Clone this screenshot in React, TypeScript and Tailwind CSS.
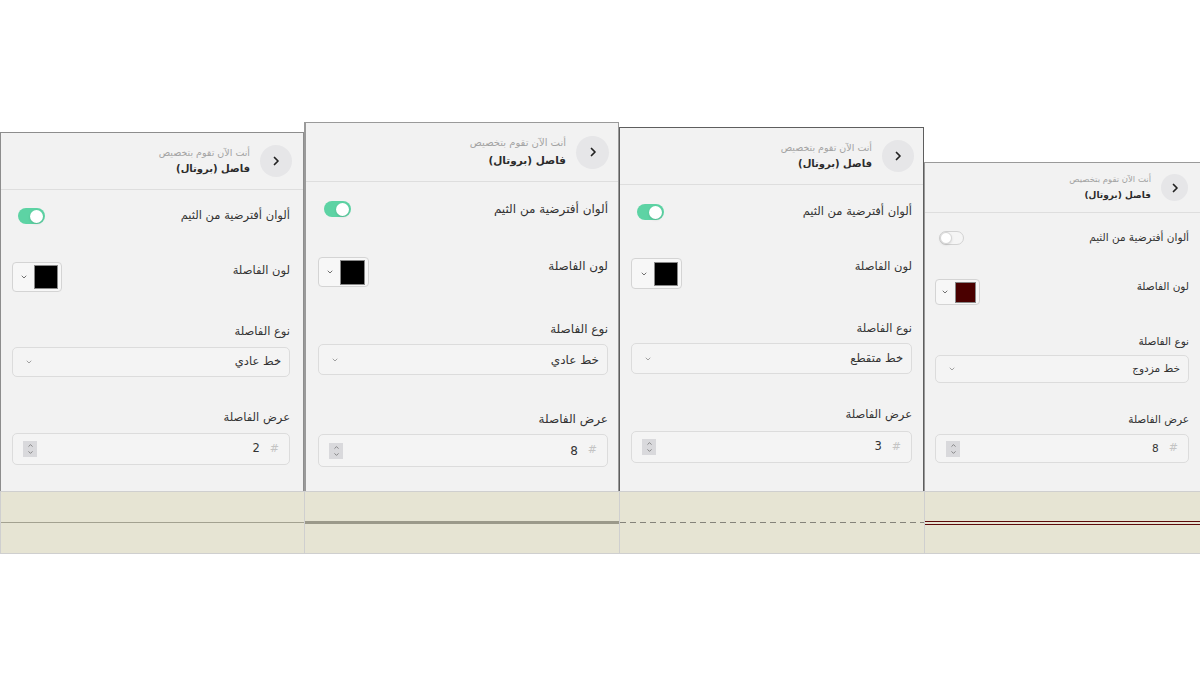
import { ChevronDown, ChevronUp } from "lucide-react";

const font = { fontFamily: '"DejaVu Sans", "Noto Sans", sans-serif' };

type Cfg = {
  col: string;
  panel: string;
  header: string;
  circle: string;
  small: string;
  title: string;
  label: string;
  toggleRow: string;
  colorRow: string;
  picker: string;
  swatch: string;
  typeLabel: string;
  select: string;
  widthLabel: string;
  input: string;
  pad: string;
  on: boolean;
  color: string;
  kind: string;
  value: string;
  line: string;
};

const panels: Cfg[] = [
  {
    col: "w-[304px]",
    panel: "h-[359px] border-t border-l border-r border-[#8d8d8d]",
    header: "h-[57px] pr-[11px]",
    circle: "w-[32px] h-[32px]",
    small: "text-[9.5px]",
    title: "text-[10px]",
    label: "text-[11.5px]",
    toggleRow: "mt-[12px] h-[28px]",
    colorRow: "mt-[32px] h-[30px]",
    picker: "w-[50px]",
    swatch: "w-[24px] h-[24px]",
    typeLabel: "mt-[32px] h-[16px]",
    select: "mt-[7px] h-[30px]",
    widthLabel: "mt-[33px] h-[16px]",
    input: "mt-[7px] h-[32px]",
    pad: "pl-[11px] pr-[13px]",
    on: true,
    color: "#000000",
    kind: "خط عادي",
    value: "2",
    line: "h-0 border-t border-[#a3a190]",
  },
  {
    col: "w-[315px]",
    panel: "h-[369px] border-t border-l-2 border-r border-[#9a9a9a]",
    header: "h-[59px] pr-[9px]",
    circle: "w-[33px] h-[33px]",
    small: "text-[10px]",
    title: "text-[10.5px]",
    label: "text-[12px]",
    toggleRow: "mt-[13px] h-[28px]",
    colorRow: "mt-[34px] h-[30px]",
    picker: "w-[51px]",
    swatch: "w-[25px] h-[25px]",
    typeLabel: "mt-[34px] h-[16px]",
    select: "mt-[7px] h-[31px]",
    widthLabel: "mt-[36px] h-[16px]",
    input: "mt-[7px] h-[33px]",
    pad: "pl-[12px] pr-[10px]",
    on: true,
    color: "#000000",
    kind: "خط عادي",
    value: "8",
    line: "h-0 border-t-[3px] border-[#9b998a]",
  },
  {
    col: "w-[305px]",
    panel: "h-[364px] border-t border-l border-r border-[#5e5e5e]",
    header: "h-[57px] pr-[9px]",
    circle: "w-[32px] h-[32px]",
    small: "text-[9.5px]",
    title: "text-[10px]",
    label: "text-[11.5px]",
    toggleRow: "mt-[13px] h-[28px]",
    colorRow: "mt-[32px] h-[31px]",
    picker: "w-[51px]",
    swatch: "w-[24px] h-[24px]",
    typeLabel: "mt-[32px] h-[16px]",
    select: "mt-[6px] h-[31px]",
    widthLabel: "mt-[33px] h-[16px]",
    input: "mt-[8px] h-[32px]",
    pad: "pl-[11px] pr-[11px]",
    on: true,
    color: "#000000",
    kind: "خط متقطع",
    value: "3",
    line: "h-[1px] bg-[repeating-linear-gradient(to_right,#85837a_0_6px,transparent_6px_10px)]",
  },
  {
    col: "w-[276px]",
    panel: "h-[329px] border-t border-l border-[#9a9a9a]",
    header: "h-[50px] pr-[12px]",
    circle: "w-[27px] h-[27px]",
    small: "text-[8.5px]",
    title: "text-[9px]",
    label: "text-[10.5px]",
    toggleRow: "mt-[13px] h-[24px]",
    colorRow: "mt-[29px] h-[26px]",
    picker: "w-[45px]",
    swatch: "w-[21px] h-[21px]",
    typeLabel: "mt-[30px] h-[14px]",
    select: "mt-[6px] h-[28px]",
    widthLabel: "mt-[30px] h-[14px]",
    input: "mt-[7px] h-[29px]",
    pad: "pl-[10px] pr-[11px]",
    on: false,
    color: "#4a0000",
    kind: "خط مزدوج",
    value: "8",
    line: "h-0 border-t-[4px] border-double border-[#5e0b0b]",
  },
];

function BackArrow() {
  return (
    <svg width="12" height="12" viewBox="0 0 24 24" fill="none" stroke="currentColor" strokeWidth="3.5" strokeLinecap="round" strokeLinejoin="round">
      <path d="M9 5l7 7-7 7" />
    </svg>
  );
}

function Panel({ c }: { c: Cfg }) {
  return (
    <div className={`flex flex-col ${c.col}`}>
      <div className={`bg-[#f2f2f2] flex flex-col ${c.panel}`} dir="rtl" style={font}>
        <div className={`flex items-center gap-[10px] border-b border-[#dedede] ${c.header}`}>
          <div className={`rounded-full bg-[#e6e6e8] flex items-center justify-center text-[#222] ${c.circle}`}>
            <BackArrow />
          </div>
          <div className="flex flex-col gap-[7px]">
            <span className={`text-[#a3a3a3] leading-none ${c.small}`}>أنت الآن تقوم بتخصيص</span>
            <span className={`text-[#2b2b2b] font-bold leading-none ${c.title}`}>فاصل (بروتال)</span>
          </div>
        </div>
        <div className={`flex flex-col ${c.pad}`}>
          <div className={`flex items-center justify-between ${c.toggleRow}`}>
            <span className={`text-[#333] ${c.label}`}>ألوان أفترضية من الثيم</span>
            {c.on ? (
              <div className="w-[27px] h-[16px] rounded-full bg-[#5dd3a4] flex items-center justify-start px-[2px] ml-[6px]">
                <div className="w-[13px] h-[13px] rounded-full bg-white shadow" />
              </div>
            ) : (
              <div className="w-[25px] h-[14px] rounded-full bg-[#f5f5f5] border border-[#d2d2d2] flex items-center justify-end ml-[4px]">
                <div className="w-[12px] h-[12px] rounded-full bg-white border border-[#d5d5d5] shadow-sm" />
              </div>
            )}
          </div>
          <div className={`flex items-center justify-between ${c.colorRow}`}>
            <span className={`text-[#333] self-start ${c.label}`}>لون الفاصلة</span>
            <div className={`h-full rounded-[4px] border border-[#d4d4d4] bg-[#f7f7f7] flex items-center gap-[6px] px-[3px] ${c.picker}`}>
              <div className={`border border-[#888] ${c.swatch}`} style={{ backgroundColor: c.color }} />
              <ChevronDown size={8} strokeWidth={2.5} className="text-[#555]" />
            </div>
          </div>
          <div className={`flex items-center ${c.typeLabel}`}>
            <span className={`text-[#333] ${c.label}`}>نوع الفاصلة</span>
          </div>
          <div className={`rounded-[5px] border border-[#dcdcdc] bg-[#f4f4f4] flex items-center justify-between pr-[8px] pl-[12px] ${c.select}`}>
            <span className={`text-[#333] ${c.label}`}>{c.kind}</span>
            <ChevronDown size={8} strokeWidth={2} className="text-[#777]" />
          </div>
          <div className={`flex items-center ${c.widthLabel}`}>
            <span className={`text-[#333] ${c.label}`}>عرض الفاصلة</span>
          </div>
          <div className={`rounded-[5px] border border-[#dcdcdc] bg-[#f4f4f4] flex items-center justify-between pr-[10px] pl-[10px] ${c.input}`}>
            <div className="flex items-center gap-[10px]">
              <span className="text-[#c4c4c4] text-[11px]">#</span>
              <span className={`text-[#333] ${c.label}`}>{c.value}</span>
            </div>
            <div className="w-[14px] h-[16px] bg-[#d9d9dc] flex flex-col items-center justify-center text-[#666]">
              <ChevronUp size={7} strokeWidth={2.5} />
              <ChevronDown size={7} strokeWidth={2.5} />
            </div>
          </div>
        </div>
      </div>
      <div className="h-[63px] bg-[#e6e4d3] border-t border-[#cfcfcf] border-l border-[#a9a9a0] border-b flex flex-col justify-center">
        <div className={c.line} />
      </div>
    </div>
  );
}

export default function App() {
  return (
    <div className="w-[1200px] h-[675px] bg-white overflow-hidden">
      <div className="flex items-end h-[554px]">
        {panels.map((p, i) => (
          <Panel key={i} c={p} />
        ))}
      </div>
    </div>
  );
}
